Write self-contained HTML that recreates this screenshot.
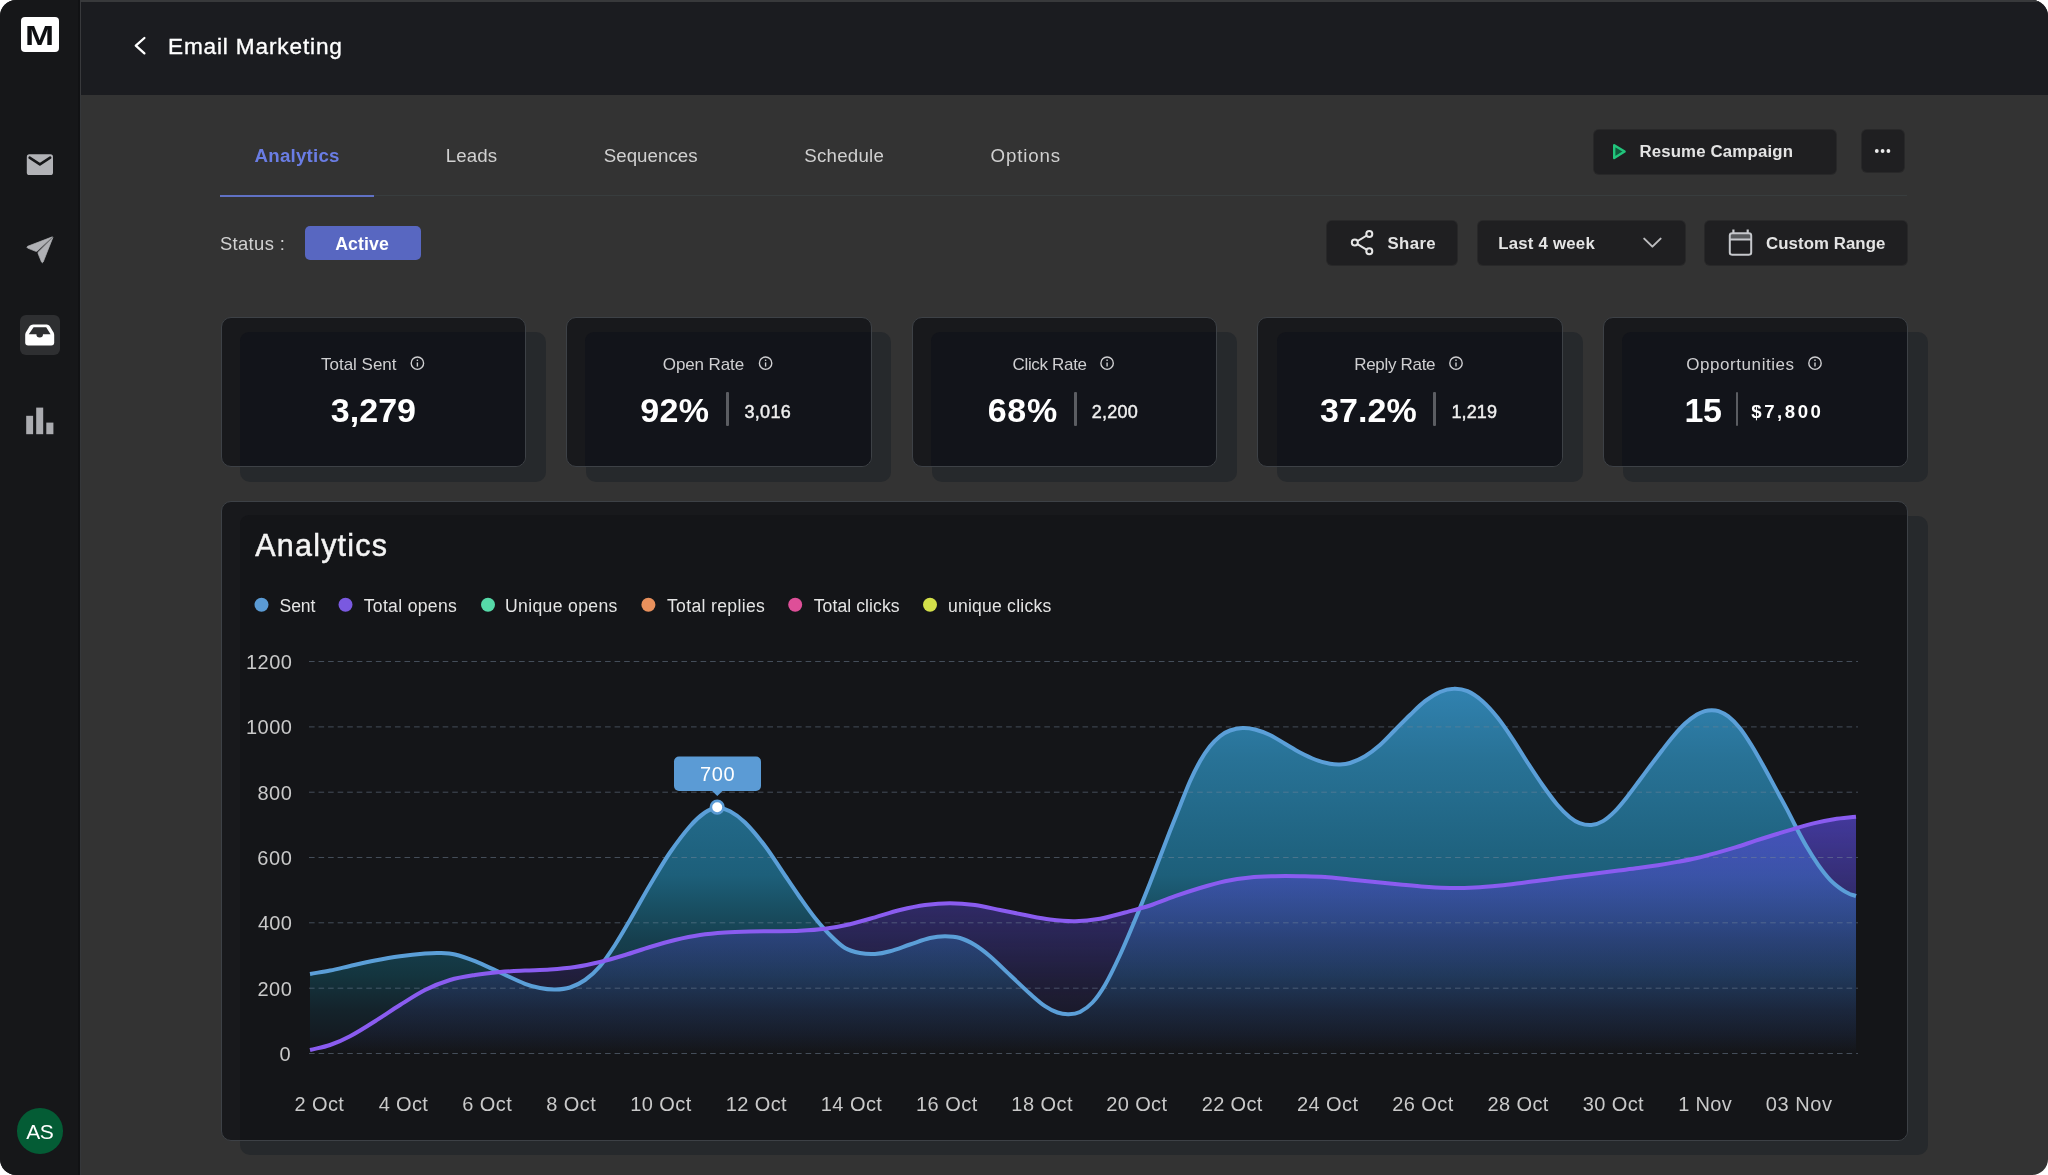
<!DOCTYPE html>
<html lang="en">
<head>
<meta charset="utf-8">
<title>Email Marketing – Analytics</title>
<style>
html,body{margin:0;padding:0;background:#ffffff;}
body{width:2048px;height:1175px;overflow:hidden;position:relative;font-family:'Liberation Sans',sans-serif;}
#app{position:absolute;left:0;top:0;width:2048px;height:1175px;border-radius:16px;overflow:hidden;background:#333333;}
.abs{position:absolute;}
.t{position:absolute;white-space:pre;line-height:1;}
#side{left:0;top:0;width:79.5px;height:1175px;background:linear-gradient(90deg,#161719 0,#161719 77.6px,#111214 78.2px,#111214 79.5px);}
#sideline{left:79.5px;top:0;width:1.5px;height:1175px;background:linear-gradient(180deg,#38393c 0,#38393c 95px,#35373a 95px);}
#head{left:81px;top:0;width:1967px;height:95px;background:#1b1c20;box-sizing:border-box;border-top:2px solid #38393b;}
.btn{position:absolute;background:#1f1f21;border-radius:5px;box-shadow:0 0 0 1px rgba(20,20,22,0.35);}
.card{position:absolute;box-sizing:border-box;border:1.5px solid #3d4146;border-radius:10px;background:#18191c;overflow:hidden;}
.card i{position:absolute;display:block;left:18.3px;top:13.6px;right:-2px;bottom:-2px;background:#12141a;border-top-left-radius:9px;}
.shadow{position:absolute;border-radius:10px;background:#26292c;}
.vdiv{position:absolute;width:2.8px;height:34px;top:392px;background:#5b5d62;border-radius:1px;}
</style>
</head>
<body>
<div id="app">
  <div id="side" class="abs"></div>
  <div id="sideline" class="abs"></div>
  <div id="head" class="abs"></div>

  <!-- tab divider + active underline -->
  <div class="abs" style="left:220px;top:195px;width:1687px;height:1.4px;background:#383d3e;"></div>
  <div class="abs" style="left:220px;top:194.5px;width:154px;height:2.2px;background:#6071c4;"></div>

  <!-- status badge -->
  <div class="abs" style="left:304.5px;top:226px;width:116.5px;height:34px;border-radius:5px;background:#5867c1;"></div>

  <!-- buttons -->
  <div class="btn" style="left:1594px;top:130px;width:242px;height:43.5px;"></div>
  <div class="btn" style="left:1862px;top:130px;width:42px;height:42px;"></div>
  <div class="btn" style="left:1327px;top:221px;width:130px;height:44px;"></div>
  <div class="btn" style="left:1477.5px;top:221px;width:207.5px;height:44px;"></div>
  <div class="btn" style="left:1705px;top:221px;width:202px;height:44px;"></div>

  <!-- stat cards -->
  <div class="shadow" style="left:240.30px;top:332.3px;width:305.6px;height:149.6px;"></div>
  <div class="shadow" style="left:585.90px;top:332.3px;width:305.6px;height:149.6px;"></div>
  <div class="shadow" style="left:931.50px;top:332.3px;width:305.6px;height:149.6px;"></div>
  <div class="shadow" style="left:1277.10px;top:332.3px;width:305.6px;height:149.6px;"></div>
  <div class="shadow" style="left:1622.70px;top:332.3px;width:305.6px;height:149.6px;"></div>
  <div class="card" style="left:220.50px;top:317.2px;width:305.6px;height:149.6px;"><i></i></div>
  <div class="card" style="left:566.10px;top:317.2px;width:305.6px;height:149.6px;"><i></i></div>
  <div class="card" style="left:911.70px;top:317.2px;width:305.6px;height:149.6px;"><i></i></div>
  <div class="card" style="left:1257.30px;top:317.2px;width:305.6px;height:149.6px;"><i></i></div>
  <div class="card" style="left:1602.90px;top:317.2px;width:305.6px;height:149.6px;"><i></i></div>
  <div class="vdiv" style="left:726.3px;"></div>
  <div class="vdiv" style="left:1074px;"></div>
  <div class="vdiv" style="left:1432.8px;"></div>
  <div class="vdiv" style="left:1735.7px;"></div>

  <!-- chart card -->
  <div class="shadow" style="left:240.3px;top:515.6px;width:1687.8px;height:639.4px;"></div>
  <div class="card" style="left:220.5px;top:500.5px;width:1687.8px;height:640.5px;"><i style="background:#141518"></i></div>

  <!-- avatar -->
  <div class="abs" style="left:17.2px;top:1108px;width:45.6px;height:45.6px;border-radius:50%;background:#045c35;"></div>
  <!-- active nav bg -->
  <div class="abs" style="left:20px;top:315px;width:40px;height:40px;border-radius:6px;background:#2e2f31;"></div>
  <!-- logo -->
  <div class="abs" style="left:21px;top:17px;width:38px;height:35px;border-radius:4px;background:#ffffff;"></div>
  <div class="t" style="left:24.8px;top:21.1px;font-size:28.2px;font-weight:700;color:#0e0f12;transform:scaleX(1.24);transform-origin:0 0;will-change:transform;">M</div>

  <svg class="abs" style="left:0;top:0" width="2048" height="1175" viewBox="0 0 2048 1175">
    <!-- sidebar icons -->
    <g id="ic-mail">
      <rect x="26.8" y="154.3" width="26.2" height="20.8" rx="2.6" fill="#b1b2b6"/>
      <polyline points="29.6,157.6 39.9,164.4 50.2,157.6" fill="none" stroke="#161719" stroke-width="2.5" stroke-linecap="round" stroke-linejoin="round"/>
    </g>
    <g id="ic-send" fill="#b0b1b5" stroke="#b0b1b5" stroke-width="0.7" stroke-linejoin="round">
      <path d="M52.4 236.8 L27.6 246.3 Q26.2 247.2 27.6 248.1 L35.6 251.3 Q36.6 251.6 37.3 250.9 L51.6 237.6 Z"/>
      <path d="M52.9 237.4 L38.4 251.9 Q37.8 252.6 38.1 253.6 L41.5 262.0 Q42.4 263.5 43.2 262.0 Z"/>
    </g>
    <g id="ic-inbox">
      <path d="M33.2 324.5 H46.8 Q48.6 324.5 49.7 326 L53.6 332.6 Q54.2 333.8 54.2 335 V342.6 Q54.2 345.6 51.2 345.6 H28.2 Q25.2 345.6 25.2 342.6 V335 Q25.2 333.8 25.8 332.6 L29.7 326 Q30.8 324.5 33.2 324.5 Z" fill="#ffffff"/>
      <path d="M33.6 327.2 H46.2 L50.6 334.2 H43 A3.3 3.3 0 0 1 36.4 334.2 H28.8 Z" fill="#2e2f31"/>
    </g>
    <g id="ic-bars" fill="#abacb0">
      <rect x="26.2" y="415.8" width="6.9" height="18.4"/>
      <rect x="36.2" y="407.6" width="7" height="26.6"/>
      <rect x="46.3" y="422.6" width="7.1" height="11.6"/>
    </g>
    <!-- back chevron -->
    <polyline points="144.4,38 135.8,45.7 144.4,53.4" fill="none" stroke="#ffffff" stroke-width="2.3" stroke-linecap="round" stroke-linejoin="round"/>
    <!-- play icon -->
    <path d="M1614.2 145.2 L1624.6 151.6 L1614.2 158 Z" fill="#0f5b3c" stroke="#22c57c" stroke-width="2.4" stroke-linejoin="round"/>
    <!-- more dots -->
    <g fill="#ececec"><circle cx="1876.8" cy="151" r="1.9"/><circle cx="1882.6" cy="151" r="1.9"/><circle cx="1888.4" cy="151" r="1.9"/></g>
    <!-- share icon -->
    <g stroke="#e6e6e6" stroke-width="2" fill="none">
      <line x1="1355" y1="242.6" x2="1369.3" y2="234"/><line x1="1355" y1="242.6" x2="1369.3" y2="251.3"/>
      <circle cx="1369.3" cy="234" r="3" fill="#1e1f21"/><circle cx="1354.8" cy="242.6" r="3" fill="#1e1f21"/><circle cx="1369.3" cy="251.3" r="3" fill="#1e1f21"/>
    </g>
    <!-- dropdown chevron -->
    <polyline points="1644.2,238.6 1652.4,246.6 1660.6,238.6" fill="none" stroke="#bdbdbf" stroke-width="2" stroke-linecap="round" stroke-linejoin="round"/>
    <!-- calendar icon -->
    <rect x="1730.6" y="234" width="19.8" height="5" fill="#57595c"/>
    <g stroke="#c6c8cc" fill="none">
      <rect x="1729.8" y="233.2" width="21.4" height="21.6" rx="2.4" stroke-width="2"/>
      <line x1="1729.8" y1="239.5" x2="1751.2" y2="239.5" stroke-width="2"/>
      <line x1="1733.4" y1="229.5" x2="1733.4" y2="233.2" stroke-width="2.2"/><line x1="1747.7" y1="229.5" x2="1747.7" y2="233.2" stroke-width="2.2"/>
    </g>
    <!-- info icons -->
    <g stroke="#cfcfd1" stroke-width="1.4" fill="none">
      <g id="inf1"><circle cx="417.4" cy="363.2" r="6.2"/><line x1="417.4" y1="362.4" x2="417.4" y2="366.6"/><line x1="417.4" y1="359.6" x2="417.4" y2="361"/></g>
      <g><circle cx="765.6" cy="363.2" r="6.2"/><line x1="765.6" y1="362.4" x2="765.6" y2="366.6"/><line x1="765.6" y1="359.6" x2="765.6" y2="361"/></g>
      <g><circle cx="1107.1" cy="363.2" r="6.2"/><line x1="1107.1" y1="362.4" x2="1107.1" y2="366.6"/><line x1="1107.1" y1="359.6" x2="1107.1" y2="361"/></g>
      <g><circle cx="1456" cy="363.2" r="6.2"/><line x1="1456" y1="362.4" x2="1456" y2="366.6"/><line x1="1456" y1="359.6" x2="1456" y2="361"/></g>
      <g><circle cx="1815" cy="363.2" r="6.2"/><line x1="1815" y1="362.4" x2="1815" y2="366.6"/><line x1="1815" y1="359.6" x2="1815" y2="361"/></g>
    </g>
    <!-- legend dots -->
    <circle cx="261.5" cy="604.8" r="7" fill="#5b9bd5"/>
    <circle cx="345.5" cy="604.8" r="7" fill="#7a59e0"/>
    <circle cx="488" cy="604.8" r="7" fill="#56d9a8"/>
    <circle cx="648.4" cy="604.8" r="7" fill="#e8905c"/>
    <circle cx="795.2" cy="604.8" r="7" fill="#de4f98"/>
    <circle cx="930" cy="604.8" r="7" fill="#d4e04a"/>
    <defs><linearGradient id="gb" gradientUnits="userSpaceOnUse" x1="0" y1="688" x2="0" y2="1053.5"><stop offset="0.000" stop-color="#3182b0" stop-opacity="1"/><stop offset="0.194" stop-color="#287296" stop-opacity="1"/><stop offset="0.443" stop-color="#1f6380" stop-opacity="1"/><stop offset="0.512" stop-color="#1d5f7a" stop-opacity="1"/><stop offset="0.594" stop-color="#195064" stop-opacity="1"/><stop offset="0.689" stop-color="#163f4e" stop-opacity="1"/><stop offset="0.785" stop-color="#14353f" stop-opacity="1"/><stop offset="0.881" stop-color="#14232b" stop-opacity="1"/><stop offset="0.949" stop-color="#141b22" stop-opacity="1"/><stop offset="1.000" stop-color="#141518" stop-opacity="1"/></linearGradient>
    <linearGradient id="gp" gradientUnits="userSpaceOnUse" x1="0" y1="816" x2="0" y2="1053.5"><stop offset="0.000" stop-color="#5648d2" stop-opacity="0.71"/><stop offset="0.143" stop-color="#5648d2" stop-opacity="0.6"/><stop offset="0.349" stop-color="#5648d2" stop-opacity="0.44"/><stop offset="0.522" stop-color="#5648d2" stop-opacity="0.31"/><stop offset="0.691" stop-color="#5648d2" stop-opacity="0.18"/><stop offset="0.901" stop-color="#5648d2" stop-opacity="0.06"/><stop offset="1.000" stop-color="#5648d2" stop-opacity="0"/></linearGradient></defs>
    <path d="M310.0 974.0C316.7 972.8 323.3 971.8 330.0 970.5C336.7 969.2 343.3 967.5 350.0 966.0C358.3 964.1 366.7 962.1 375.0 960.5C383.3 958.9 391.7 957.4 400.0 956.2C408.3 955.1 416.7 954.2 425.0 953.5C430.0 953.1 435.0 952.8 440.0 953.0C445.0 953.2 450.0 953.3 455.0 954.5C461.7 956.1 468.3 958.6 475.0 961.2C483.3 964.6 491.7 968.8 500.0 972.5C508.3 976.2 516.7 980.5 525.0 983.8C530.0 985.7 535.0 987.0 540.0 988.0C545.0 989.0 550.0 989.6 555.0 989.5C560.0 989.4 565.0 989.1 570.0 987.5C575.0 985.9 580.0 983.5 585.0 980.0C590.0 976.5 595.0 972.1 600.0 966.2C605.0 960.4 610.0 952.7 615.0 945.0C620.0 937.3 625.0 928.6 630.0 920.0C636.7 908.6 643.3 896.2 650.0 885.0C656.7 873.8 663.3 862.3 670.0 852.5C676.7 842.7 683.3 833.9 690.0 826.2C695.0 820.5 700.0 815.9 705.0 812.5C709.0 809.8 713.0 808.2 717.0 808.0C721.3 807.8 725.7 809.0 730.0 811.2C735.0 813.8 740.0 817.5 745.0 822.5C751.7 829.1 758.3 837.2 765.0 846.0C771.7 854.8 778.3 865.7 785.0 875.5C790.0 882.9 795.0 890.4 800.0 897.5C805.0 904.6 810.0 911.8 815.0 918.0C820.0 924.2 825.0 930.0 830.0 935.0C835.0 940.0 840.0 945.0 845.0 948.0C850.0 951.0 855.0 952.0 860.0 953.0C865.0 954.0 870.0 954.3 875.0 954.0C880.0 953.7 885.0 952.6 890.0 951.2C896.7 949.4 903.3 946.7 910.0 944.5C916.7 942.3 923.3 939.6 930.0 938.0C935.0 936.8 940.0 936.2 945.0 936.2C950.0 936.2 955.0 936.5 960.0 938.0C965.0 939.5 970.0 942.0 975.0 945.0C980.0 948.0 985.0 952.0 990.0 956.2C996.7 962.0 1003.3 968.8 1010.0 975.0C1016.7 981.2 1023.3 987.8 1030.0 993.8C1035.0 998.2 1040.0 1002.8 1045.0 1006.2C1049.2 1009.1 1053.3 1011.1 1057.5 1012.5C1061.2 1013.8 1065.0 1014.3 1068.8 1014.2C1072.5 1014.2 1076.2 1013.9 1080.0 1012.0C1084.2 1009.9 1088.3 1007.0 1092.5 1002.5C1096.7 998.0 1100.8 992.2 1105.0 985.0C1110.0 976.4 1115.0 965.8 1120.0 955.0C1125.0 944.2 1130.0 932.0 1135.0 920.0C1140.0 908.0 1145.0 895.6 1150.0 883.0C1153.3 874.6 1156.7 865.7 1160.0 857.0C1163.3 848.3 1166.7 839.5 1170.0 831.0C1173.3 822.5 1176.7 814.3 1180.0 806.0C1183.3 797.7 1186.7 788.7 1190.0 781.2C1193.3 773.8 1196.7 767.1 1200.0 761.2C1203.3 755.4 1206.7 750.4 1210.0 746.2C1213.3 742.1 1216.7 738.9 1220.0 736.2C1223.3 733.6 1226.7 731.7 1230.0 730.5C1234.2 729.0 1238.3 728.2 1242.5 728.0C1246.7 727.8 1250.8 728.4 1255.0 729.5C1260.0 730.8 1265.0 732.6 1270.0 735.0C1275.0 737.4 1280.0 740.8 1285.0 743.8C1290.0 746.7 1295.0 749.9 1300.0 752.5C1305.0 755.1 1310.0 757.6 1315.0 759.5C1320.0 761.4 1325.0 762.8 1330.0 763.8C1333.3 764.4 1336.7 764.6 1340.0 764.5C1343.3 764.4 1346.7 764.1 1350.0 763.0C1355.0 761.4 1360.0 759.2 1365.0 756.2C1370.0 753.2 1375.0 749.4 1380.0 745.0C1385.0 740.6 1390.0 735.0 1395.0 730.0C1400.0 725.0 1405.0 719.8 1410.0 715.0C1415.0 710.2 1420.0 705.1 1425.0 701.2C1430.0 697.4 1435.0 694.2 1440.0 692.0C1444.6 690.0 1449.2 688.9 1453.8 688.8C1458.3 688.6 1462.9 689.3 1467.5 691.2C1472.5 693.4 1477.5 696.9 1482.5 701.2C1487.5 705.6 1492.5 711.2 1497.5 717.5C1502.5 723.8 1507.5 731.2 1512.5 738.8C1517.5 746.2 1522.5 754.8 1527.5 762.5C1532.5 770.2 1537.5 777.9 1542.5 785.0C1547.5 792.1 1552.5 799.1 1557.5 805.0C1561.6 809.8 1565.7 813.8 1569.8 817.2C1573.1 819.9 1576.3 821.9 1579.6 823.1C1583.5 824.5 1587.4 825.3 1591.3 825.0C1595.2 824.7 1599.1 823.4 1603.0 821.1C1606.9 818.8 1610.9 815.3 1614.8 811.4C1618.7 807.5 1622.6 802.6 1626.5 797.7C1630.4 792.8 1634.4 787.3 1638.3 782.0C1642.2 776.8 1646.1 771.5 1650.0 766.3C1653.9 761.1 1657.9 755.8 1661.8 750.7C1665.7 745.7 1669.6 740.5 1673.5 736.0C1677.4 731.4 1681.4 726.9 1685.3 723.3C1689.2 719.7 1693.1 716.9 1697.0 714.5C1699.6 712.9 1702.2 711.9 1704.8 711.1C1707.1 710.4 1709.4 710.2 1711.7 710.2C1714.0 710.2 1716.2 710.3 1718.5 711.1C1721.8 712.3 1725.0 713.8 1728.3 716.4C1732.2 719.5 1736.1 723.3 1740.0 728.2C1743.9 733.1 1747.9 739.4 1751.8 745.8C1755.7 752.1 1759.7 759.3 1763.6 766.3C1767.5 773.3 1771.4 780.7 1775.3 787.9C1779.2 795.1 1783.1 802.0 1787.0 809.4C1789.6 814.4 1792.3 820.0 1794.9 825.0C1798.8 832.4 1802.7 839.9 1806.6 846.6C1810.5 853.3 1814.5 859.6 1818.4 865.2C1822.3 870.7 1826.2 875.8 1830.1 879.9C1834.0 884.0 1838.0 886.9 1841.9 889.7C1844.5 891.6 1847.1 892.8 1849.7 894.0C1851.8 894.9 1853.9 895.3 1856.0 896.0L1856 1053.5L310 1053.5Z" fill="url(#gb)"/>
    <path d="M310.0 1050.0C316.7 1048.3 323.3 1047.3 330.0 1045.0C336.7 1042.7 343.3 1039.8 350.0 1036.2C358.3 1031.9 366.7 1026.5 375.0 1021.2C383.3 1016.0 391.7 1010.2 400.0 1005.0C408.3 999.8 416.7 994.2 425.0 990.0C433.3 985.8 441.7 982.5 450.0 980.0C458.3 977.5 466.7 976.3 475.0 975.0C483.3 973.7 491.7 972.8 500.0 972.0C508.3 971.2 516.7 970.9 525.0 970.5C533.3 970.1 541.7 970.1 550.0 969.5C558.3 968.9 566.7 968.2 575.0 967.0C583.3 965.8 591.7 964.0 600.0 962.0C608.3 960.0 616.7 957.5 625.0 955.0C633.3 952.5 641.7 949.5 650.0 947.0C658.3 944.5 666.7 942.0 675.0 940.0C683.3 938.0 691.7 936.2 700.0 935.0C708.3 933.8 716.7 933.1 725.0 932.5C733.3 931.9 741.7 931.7 750.0 931.5C758.3 931.3 766.7 931.4 775.0 931.3C783.3 931.2 791.7 931.2 800.0 930.8C808.3 930.4 816.7 929.9 825.0 928.8C833.3 927.6 841.7 926.1 850.0 924.2C858.3 922.3 866.7 919.7 875.0 917.3C883.3 914.9 891.7 912.0 900.0 910.0C908.3 908.0 916.7 906.1 925.0 905.0C933.3 903.9 941.7 903.2 950.0 903.2C958.3 903.2 966.7 903.9 975.0 905.0C983.3 906.1 991.7 908.3 1000.0 910.0C1008.3 911.7 1016.7 913.4 1025.0 915.0C1033.3 916.6 1041.7 918.5 1050.0 919.5C1058.3 920.5 1066.7 921.4 1075.0 921.2C1083.3 921.1 1091.7 920.2 1100.0 918.8C1108.3 917.3 1116.7 914.7 1125.0 912.5C1133.3 910.3 1141.7 908.2 1150.0 905.5C1158.3 902.8 1166.7 899.2 1175.0 896.2C1183.3 893.3 1191.7 890.5 1200.0 888.0C1208.3 885.5 1216.7 883.0 1225.0 881.2C1233.3 879.5 1241.7 878.3 1250.0 877.5C1258.3 876.7 1266.7 876.5 1275.0 876.2C1283.3 876.0 1291.7 876.1 1300.0 876.2C1308.3 876.4 1316.7 876.5 1325.0 877.0C1333.3 877.5 1341.7 878.7 1350.0 879.5C1358.3 880.3 1366.7 881.2 1375.0 882.0C1383.3 882.8 1391.7 883.7 1400.0 884.5C1408.3 885.3 1416.7 886.2 1425.0 886.8C1433.3 887.3 1441.7 887.9 1450.0 888.0C1458.3 888.1 1466.7 887.9 1475.0 887.5C1483.3 887.1 1491.7 886.3 1500.0 885.5C1508.3 884.7 1516.7 883.5 1525.0 882.5C1533.3 881.5 1541.7 880.3 1550.0 879.2C1559.9 877.9 1569.7 876.7 1579.6 875.4C1586.1 874.6 1592.6 873.7 1599.1 872.9C1605.6 872.1 1612.2 871.3 1618.7 870.5C1625.2 869.7 1631.8 869.0 1638.3 868.1C1644.8 867.2 1651.4 866.2 1657.9 865.2C1664.4 864.2 1670.9 863.1 1677.4 861.9C1683.9 860.7 1690.5 859.5 1697.0 858.0C1703.5 856.5 1710.1 854.7 1716.6 852.9C1723.1 851.1 1729.7 849.2 1736.2 847.2C1742.7 845.2 1749.2 842.8 1755.7 840.7C1762.2 838.6 1768.8 836.5 1775.3 834.5C1781.8 832.5 1788.4 830.5 1794.9 828.6C1801.4 826.7 1808.0 824.7 1814.5 823.1C1821.0 821.5 1827.5 820.2 1834.0 819.2C1841.3 818.1 1848.7 817.6 1856.0 816.8L1856 1053.5L310 1053.5Z" fill="url(#gp)"/>
    <line x1="309" y1="1053.5" x2="1858" y2="1053.5" stroke="#74859a" stroke-opacity="0.5" stroke-width="1" stroke-dasharray="5.6 3.95"/>
    <line x1="309" y1="988.2" x2="1858" y2="988.2" stroke="#74859a" stroke-opacity="0.5" stroke-width="1" stroke-dasharray="5.6 3.95"/>
    <line x1="309" y1="922.8" x2="1858" y2="922.8" stroke="#74859a" stroke-opacity="0.5" stroke-width="1" stroke-dasharray="5.6 3.95"/>
    <line x1="309" y1="857.5" x2="1858" y2="857.5" stroke="#74859a" stroke-opacity="0.5" stroke-width="1" stroke-dasharray="5.6 3.95"/>
    <line x1="309" y1="792.2" x2="1858" y2="792.2" stroke="#74859a" stroke-opacity="0.5" stroke-width="1" stroke-dasharray="5.6 3.95"/>
    <line x1="309" y1="726.9" x2="1858" y2="726.9" stroke="#74859a" stroke-opacity="0.5" stroke-width="1" stroke-dasharray="5.6 3.95"/>
    <line x1="309" y1="661.5" x2="1858" y2="661.5" stroke="#74859a" stroke-opacity="0.5" stroke-width="1" stroke-dasharray="5.6 3.95"/>
    <path d="M310.0 974.0C316.7 972.8 323.3 971.8 330.0 970.5C336.7 969.2 343.3 967.5 350.0 966.0C358.3 964.1 366.7 962.1 375.0 960.5C383.3 958.9 391.7 957.4 400.0 956.2C408.3 955.1 416.7 954.2 425.0 953.5C430.0 953.1 435.0 952.8 440.0 953.0C445.0 953.2 450.0 953.3 455.0 954.5C461.7 956.1 468.3 958.6 475.0 961.2C483.3 964.6 491.7 968.8 500.0 972.5C508.3 976.2 516.7 980.5 525.0 983.8C530.0 985.7 535.0 987.0 540.0 988.0C545.0 989.0 550.0 989.6 555.0 989.5C560.0 989.4 565.0 989.1 570.0 987.5C575.0 985.9 580.0 983.5 585.0 980.0C590.0 976.5 595.0 972.1 600.0 966.2C605.0 960.4 610.0 952.7 615.0 945.0C620.0 937.3 625.0 928.6 630.0 920.0C636.7 908.6 643.3 896.2 650.0 885.0C656.7 873.8 663.3 862.3 670.0 852.5C676.7 842.7 683.3 833.9 690.0 826.2C695.0 820.5 700.0 815.9 705.0 812.5C709.0 809.8 713.0 808.2 717.0 808.0C721.3 807.8 725.7 809.0 730.0 811.2C735.0 813.8 740.0 817.5 745.0 822.5C751.7 829.1 758.3 837.2 765.0 846.0C771.7 854.8 778.3 865.7 785.0 875.5C790.0 882.9 795.0 890.4 800.0 897.5C805.0 904.6 810.0 911.8 815.0 918.0C820.0 924.2 825.0 930.0 830.0 935.0C835.0 940.0 840.0 945.0 845.0 948.0C850.0 951.0 855.0 952.0 860.0 953.0C865.0 954.0 870.0 954.3 875.0 954.0C880.0 953.7 885.0 952.6 890.0 951.2C896.7 949.4 903.3 946.7 910.0 944.5C916.7 942.3 923.3 939.6 930.0 938.0C935.0 936.8 940.0 936.2 945.0 936.2C950.0 936.2 955.0 936.5 960.0 938.0C965.0 939.5 970.0 942.0 975.0 945.0C980.0 948.0 985.0 952.0 990.0 956.2C996.7 962.0 1003.3 968.8 1010.0 975.0C1016.7 981.2 1023.3 987.8 1030.0 993.8C1035.0 998.2 1040.0 1002.8 1045.0 1006.2C1049.2 1009.1 1053.3 1011.1 1057.5 1012.5C1061.2 1013.8 1065.0 1014.3 1068.8 1014.2C1072.5 1014.2 1076.2 1013.9 1080.0 1012.0C1084.2 1009.9 1088.3 1007.0 1092.5 1002.5C1096.7 998.0 1100.8 992.2 1105.0 985.0C1110.0 976.4 1115.0 965.8 1120.0 955.0C1125.0 944.2 1130.0 932.0 1135.0 920.0C1140.0 908.0 1145.0 895.6 1150.0 883.0C1153.3 874.6 1156.7 865.7 1160.0 857.0C1163.3 848.3 1166.7 839.5 1170.0 831.0C1173.3 822.5 1176.7 814.3 1180.0 806.0C1183.3 797.7 1186.7 788.7 1190.0 781.2C1193.3 773.8 1196.7 767.1 1200.0 761.2C1203.3 755.4 1206.7 750.4 1210.0 746.2C1213.3 742.1 1216.7 738.9 1220.0 736.2C1223.3 733.6 1226.7 731.7 1230.0 730.5C1234.2 729.0 1238.3 728.2 1242.5 728.0C1246.7 727.8 1250.8 728.4 1255.0 729.5C1260.0 730.8 1265.0 732.6 1270.0 735.0C1275.0 737.4 1280.0 740.8 1285.0 743.8C1290.0 746.7 1295.0 749.9 1300.0 752.5C1305.0 755.1 1310.0 757.6 1315.0 759.5C1320.0 761.4 1325.0 762.8 1330.0 763.8C1333.3 764.4 1336.7 764.6 1340.0 764.5C1343.3 764.4 1346.7 764.1 1350.0 763.0C1355.0 761.4 1360.0 759.2 1365.0 756.2C1370.0 753.2 1375.0 749.4 1380.0 745.0C1385.0 740.6 1390.0 735.0 1395.0 730.0C1400.0 725.0 1405.0 719.8 1410.0 715.0C1415.0 710.2 1420.0 705.1 1425.0 701.2C1430.0 697.4 1435.0 694.2 1440.0 692.0C1444.6 690.0 1449.2 688.9 1453.8 688.8C1458.3 688.6 1462.9 689.3 1467.5 691.2C1472.5 693.4 1477.5 696.9 1482.5 701.2C1487.5 705.6 1492.5 711.2 1497.5 717.5C1502.5 723.8 1507.5 731.2 1512.5 738.8C1517.5 746.2 1522.5 754.8 1527.5 762.5C1532.5 770.2 1537.5 777.9 1542.5 785.0C1547.5 792.1 1552.5 799.1 1557.5 805.0C1561.6 809.8 1565.7 813.8 1569.8 817.2C1573.1 819.9 1576.3 821.9 1579.6 823.1C1583.5 824.5 1587.4 825.3 1591.3 825.0C1595.2 824.7 1599.1 823.4 1603.0 821.1C1606.9 818.8 1610.9 815.3 1614.8 811.4C1618.7 807.5 1622.6 802.6 1626.5 797.7C1630.4 792.8 1634.4 787.3 1638.3 782.0C1642.2 776.8 1646.1 771.5 1650.0 766.3C1653.9 761.1 1657.9 755.8 1661.8 750.7C1665.7 745.7 1669.6 740.5 1673.5 736.0C1677.4 731.4 1681.4 726.9 1685.3 723.3C1689.2 719.7 1693.1 716.9 1697.0 714.5C1699.6 712.9 1702.2 711.9 1704.8 711.1C1707.1 710.4 1709.4 710.2 1711.7 710.2C1714.0 710.2 1716.2 710.3 1718.5 711.1C1721.8 712.3 1725.0 713.8 1728.3 716.4C1732.2 719.5 1736.1 723.3 1740.0 728.2C1743.9 733.1 1747.9 739.4 1751.8 745.8C1755.7 752.1 1759.7 759.3 1763.6 766.3C1767.5 773.3 1771.4 780.7 1775.3 787.9C1779.2 795.1 1783.1 802.0 1787.0 809.4C1789.6 814.4 1792.3 820.0 1794.9 825.0C1798.8 832.4 1802.7 839.9 1806.6 846.6C1810.5 853.3 1814.5 859.6 1818.4 865.2C1822.3 870.7 1826.2 875.8 1830.1 879.9C1834.0 884.0 1838.0 886.9 1841.9 889.7C1844.5 891.6 1847.1 892.8 1849.7 894.0C1851.8 894.9 1853.9 895.3 1856.0 896.0" fill="none" stroke="#5b9fd8" stroke-width="4" stroke-linejoin="round"/>
    <path d="M310.0 1050.0C316.7 1048.3 323.3 1047.3 330.0 1045.0C336.7 1042.7 343.3 1039.8 350.0 1036.2C358.3 1031.9 366.7 1026.5 375.0 1021.2C383.3 1016.0 391.7 1010.2 400.0 1005.0C408.3 999.8 416.7 994.2 425.0 990.0C433.3 985.8 441.7 982.5 450.0 980.0C458.3 977.5 466.7 976.3 475.0 975.0C483.3 973.7 491.7 972.8 500.0 972.0C508.3 971.2 516.7 970.9 525.0 970.5C533.3 970.1 541.7 970.1 550.0 969.5C558.3 968.9 566.7 968.2 575.0 967.0C583.3 965.8 591.7 964.0 600.0 962.0C608.3 960.0 616.7 957.5 625.0 955.0C633.3 952.5 641.7 949.5 650.0 947.0C658.3 944.5 666.7 942.0 675.0 940.0C683.3 938.0 691.7 936.2 700.0 935.0C708.3 933.8 716.7 933.1 725.0 932.5C733.3 931.9 741.7 931.7 750.0 931.5C758.3 931.3 766.7 931.4 775.0 931.3C783.3 931.2 791.7 931.2 800.0 930.8C808.3 930.4 816.7 929.9 825.0 928.8C833.3 927.6 841.7 926.1 850.0 924.2C858.3 922.3 866.7 919.7 875.0 917.3C883.3 914.9 891.7 912.0 900.0 910.0C908.3 908.0 916.7 906.1 925.0 905.0C933.3 903.9 941.7 903.2 950.0 903.2C958.3 903.2 966.7 903.9 975.0 905.0C983.3 906.1 991.7 908.3 1000.0 910.0C1008.3 911.7 1016.7 913.4 1025.0 915.0C1033.3 916.6 1041.7 918.5 1050.0 919.5C1058.3 920.5 1066.7 921.4 1075.0 921.2C1083.3 921.1 1091.7 920.2 1100.0 918.8C1108.3 917.3 1116.7 914.7 1125.0 912.5C1133.3 910.3 1141.7 908.2 1150.0 905.5C1158.3 902.8 1166.7 899.2 1175.0 896.2C1183.3 893.3 1191.7 890.5 1200.0 888.0C1208.3 885.5 1216.7 883.0 1225.0 881.2C1233.3 879.5 1241.7 878.3 1250.0 877.5C1258.3 876.7 1266.7 876.5 1275.0 876.2C1283.3 876.0 1291.7 876.1 1300.0 876.2C1308.3 876.4 1316.7 876.5 1325.0 877.0C1333.3 877.5 1341.7 878.7 1350.0 879.5C1358.3 880.3 1366.7 881.2 1375.0 882.0C1383.3 882.8 1391.7 883.7 1400.0 884.5C1408.3 885.3 1416.7 886.2 1425.0 886.8C1433.3 887.3 1441.7 887.9 1450.0 888.0C1458.3 888.1 1466.7 887.9 1475.0 887.5C1483.3 887.1 1491.7 886.3 1500.0 885.5C1508.3 884.7 1516.7 883.5 1525.0 882.5C1533.3 881.5 1541.7 880.3 1550.0 879.2C1559.9 877.9 1569.7 876.7 1579.6 875.4C1586.1 874.6 1592.6 873.7 1599.1 872.9C1605.6 872.1 1612.2 871.3 1618.7 870.5C1625.2 869.7 1631.8 869.0 1638.3 868.1C1644.8 867.2 1651.4 866.2 1657.9 865.2C1664.4 864.2 1670.9 863.1 1677.4 861.9C1683.9 860.7 1690.5 859.5 1697.0 858.0C1703.5 856.5 1710.1 854.7 1716.6 852.9C1723.1 851.1 1729.7 849.2 1736.2 847.2C1742.7 845.2 1749.2 842.8 1755.7 840.7C1762.2 838.6 1768.8 836.5 1775.3 834.5C1781.8 832.5 1788.4 830.5 1794.9 828.6C1801.4 826.7 1808.0 824.7 1814.5 823.1C1821.0 821.5 1827.5 820.2 1834.0 819.2C1841.3 818.1 1848.7 817.6 1856.0 816.8" fill="none" stroke="#8a5cf0" stroke-width="4" stroke-linejoin="round"/>
    <rect x="674" y="756.5" width="87" height="34.5" rx="5" fill="#5b9bd5"/>
    <path d="M711.6 790.5 H723 L717.3 796 Z" fill="#5b9bd5"/>
    <circle cx="717.2" cy="807.2" r="6.3" fill="#ffffff" stroke="#5b9bd5" stroke-width="2.6"/>
  </svg>

<div id="txt" style="position:absolute;left:0;top:0;width:2048px;height:1175px;will-change:transform;">
<div class="t" style="left:168.00px;top:36px;font-size:22.6px;font-weight:400;color:#ffffff;letter-spacing:0.849px;-webkit-text-stroke:0.35px #fff;">Email Marketing</div>
<div class="t" style="left:254.61px;top:147px;font-size:18.7px;font-weight:700;color:#6a7de4;letter-spacing:0.217px;">Analytics</div>
<div class="t" style="left:445.83px;top:147px;font-size:18.7px;font-weight:400;color:#d0d0d0;letter-spacing:0.068px;">Leads</div>
<div class="t" style="left:603.67px;top:147px;font-size:18.7px;font-weight:400;color:#d0d0d0;letter-spacing:0.056px;">Sequences</div>
<div class="t" style="left:804.17px;top:147px;font-size:18.7px;font-weight:400;color:#d0d0d0;letter-spacing:0.262px;">Schedule</div>
<div class="t" style="left:990.60px;top:147px;font-size:18.7px;font-weight:400;color:#d0d0d0;letter-spacing:0.840px;">Options</div>
<div class="t" style="left:219.88px;top:235px;font-size:18.4px;font-weight:400;color:#d2d2d2;letter-spacing:0.369px;">Status :</div>
<div class="t" style="left:335.15px;top:236px;font-size:17.7px;font-weight:700;color:#ffffff;letter-spacing:0.124px;">Active</div>
<div class="t" style="left:1639.40px;top:144px;font-size:16.8px;font-weight:700;color:#e4e4e4;letter-spacing:0.174px;">Resume Campaign</div>
<div class="t" style="left:1387.58px;top:236px;font-size:16.8px;font-weight:700;color:#e4e4e4;letter-spacing:0.345px;">Share</div>
<div class="t" style="left:1498.20px;top:236px;font-size:16.8px;font-weight:700;color:#e4e4e4;letter-spacing:0.235px;">Last 4 week</div>
<div class="t" style="left:1766.11px;top:236px;font-size:16.8px;font-weight:700;color:#e4e4e4;letter-spacing:0.070px;">Custom Range</div>
<div class="t" style="left:320.97px;top:356px;font-size:17px;font-weight:400;color:#cfcfd1;letter-spacing:-0.004px;">Total Sent</div>
<div class="t" style="left:662.80px;top:356px;font-size:17px;font-weight:400;color:#cfcfd1;letter-spacing:-0.107px;">Open Rate</div>
<div class="t" style="left:1012.50px;top:356px;font-size:17px;font-weight:400;color:#cfcfd1;letter-spacing:-0.322px;">Click Rate</div>
<div class="t" style="left:1354.26px;top:356px;font-size:17px;font-weight:400;color:#cfcfd1;letter-spacing:-0.314px;">Reply Rate</div>
<div class="t" style="left:1686.30px;top:356px;font-size:17px;font-weight:400;color:#cfcfd1;letter-spacing:0.557px;">Opportunities</div>
<div class="t" style="left:330.79px;top:393px;font-size:34px;font-weight:700;color:#fff;letter-spacing:0.031px;">3,279</div>
<div class="t" style="left:640.21px;top:393px;font-size:34px;font-weight:700;color:#fff;letter-spacing:0.396px;">92%</div>
<div class="t" style="left:987.67px;top:393px;font-size:34px;font-weight:700;color:#fff;letter-spacing:0.766px;">68%</div>
<div class="t" style="left:1319.89px;top:393px;font-size:34px;font-weight:700;color:#fff;letter-spacing:0.126px;">37.2%</div>
<div class="t" style="left:1684.38px;top:393px;font-size:34px;font-weight:700;color:#fff;letter-spacing:-0.304px;">15</div>
<div class="t" style="left:744.57px;top:403px;font-size:18px;font-weight:400;color:#f0f0f0;letter-spacing:0.269px;-webkit-text-stroke:0.45px #f0f0f0;">3,016</div>
<div class="t" style="left:1091.86px;top:403px;font-size:18px;font-weight:400;color:#f0f0f0;letter-spacing:0.240px;-webkit-text-stroke:0.45px #f0f0f0;">2,200</div>
<div class="t" style="left:1451.47px;top:403px;font-size:18px;font-weight:400;color:#f0f0f0;letter-spacing:0.108px;-webkit-text-stroke:0.45px #f0f0f0;">1,219</div>
<div class="t" style="left:1751.27px;top:403px;font-size:18.6px;font-weight:700;color:#fff;letter-spacing:2.547px;">$7,800</div>
<div class="t" style="left:255.33px;top:530px;font-size:30.5px;font-weight:400;color:#f4f4f4;letter-spacing:1.194px;-webkit-text-stroke:0.5px #f4f4f4;">Analytics</div>
<div class="t" style="left:279.52px;top:598px;font-size:17.6px;font-weight:400;color:#e4e4e4;letter-spacing:-0.084px;">Sent</div>
<div class="t" style="left:363.66px;top:598px;font-size:17.6px;font-weight:400;color:#e4e4e4;letter-spacing:0.323px;">Total opens</div>
<div class="t" style="left:505.09px;top:598px;font-size:17.6px;font-weight:400;color:#e4e4e4;letter-spacing:0.340px;">Unique opens</div>
<div class="t" style="left:666.96px;top:598px;font-size:17.6px;font-weight:400;color:#e4e4e4;letter-spacing:0.336px;">Total replies</div>
<div class="t" style="left:813.66px;top:598px;font-size:17.6px;font-weight:400;color:#e4e4e4;letter-spacing:0.084px;">Total clicks</div>
<div class="t" style="left:947.88px;top:598px;font-size:17.6px;font-weight:400;color:#e4e4e4;letter-spacing:0.218px;">unique clicks</div>
<div class="t" style="left:279.60px;top:1044px;font-size:20px;font-weight:400;color:#c9c9c9;letter-spacing:0.000px;">0</div>
<div class="t" style="left:257.40px;top:979px;font-size:20px;font-weight:400;color:#c9c9c9;letter-spacing:0.502px;">200</div>
<div class="t" style="left:258.00px;top:913px;font-size:20px;font-weight:400;color:#c9c9c9;letter-spacing:0.200px;">400</div>
<div class="t" style="left:257.36px;top:848px;font-size:20px;font-weight:400;color:#c9c9c9;letter-spacing:0.524px;">600</div>
<div class="t" style="left:257.40px;top:783px;font-size:20px;font-weight:400;color:#c9c9c9;letter-spacing:0.502px;">800</div>
<div class="t" style="left:245.93px;top:717px;font-size:20px;font-weight:400;color:#c9c9c9;letter-spacing:0.492px;">1000</div>
<div class="t" style="left:245.93px;top:652px;font-size:20px;font-weight:400;color:#c9c9c9;letter-spacing:0.492px;">1200</div>
<div class="t" style="left:294.60px;top:1094px;font-size:20px;font-weight:400;color:#c9c9c9;letter-spacing:0.373px;">2 Oct</div>
<div class="t" style="left:378.80px;top:1094px;font-size:20px;font-weight:400;color:#c9c9c9;letter-spacing:0.322px;">4 Oct</div>
<div class="t" style="left:462.16px;top:1094px;font-size:20px;font-weight:400;color:#c9c9c9;letter-spacing:0.459px;">6 Oct</div>
<div class="t" style="left:546.20px;top:1094px;font-size:20px;font-weight:400;color:#c9c9c9;letter-spacing:0.448px;">8 Oct</div>
<div class="t" style="left:630.13px;top:1094px;font-size:20px;font-weight:400;color:#c9c9c9;letter-spacing:0.453px;">10 Oct</div>
<div class="t" style="left:725.83px;top:1094px;font-size:20px;font-weight:400;color:#c9c9c9;letter-spacing:0.373px;">12 Oct</div>
<div class="t" style="left:820.73px;top:1094px;font-size:20px;font-weight:400;color:#c9c9c9;letter-spacing:0.453px;">14 Oct</div>
<div class="t" style="left:916.03px;top:1094px;font-size:20px;font-weight:400;color:#c9c9c9;letter-spacing:0.453px;">16 Oct</div>
<div class="t" style="left:1011.33px;top:1094px;font-size:20px;font-weight:400;color:#c9c9c9;letter-spacing:0.453px;">18 Oct</div>
<div class="t" style="left:1106.30px;top:1094px;font-size:20px;font-weight:400;color:#c9c9c9;letter-spacing:0.358px;">20 Oct</div>
<div class="t" style="left:1201.70px;top:1094px;font-size:20px;font-weight:400;color:#c9c9c9;letter-spacing:0.338px;">22 Oct</div>
<div class="t" style="left:1297.00px;top:1094px;font-size:20px;font-weight:400;color:#c9c9c9;letter-spacing:0.418px;">24 Oct</div>
<div class="t" style="left:1392.30px;top:1094px;font-size:20px;font-weight:400;color:#c9c9c9;letter-spacing:0.418px;">26 Oct</div>
<div class="t" style="left:1487.60px;top:1094px;font-size:20px;font-weight:400;color:#c9c9c9;letter-spacing:0.358px;">28 Oct</div>
<div class="t" style="left:1582.81px;top:1094px;font-size:20px;font-weight:400;color:#c9c9c9;letter-spacing:0.377px;">30 Oct</div>
<div class="t" style="left:1678.13px;top:1094px;font-size:20px;font-weight:400;color:#c9c9c9;letter-spacing:0.375px;">1 Nov</div>
<div class="t" style="left:1765.70px;top:1094px;font-size:20px;font-weight:400;color:#c9c9c9;letter-spacing:0.585px;">03 Nov</div>
<div class="t" style="left:699.98px;top:764px;font-size:20px;font-weight:400;color:#ffffff;letter-spacing:0.589px;">700</div>
<div class="t" style="left:26.18px;top:1121px;font-size:21px;font-weight:400;color:#ffffff;letter-spacing:-0.469px;">AS</div>
</div>
</div>
</body>
</html>
